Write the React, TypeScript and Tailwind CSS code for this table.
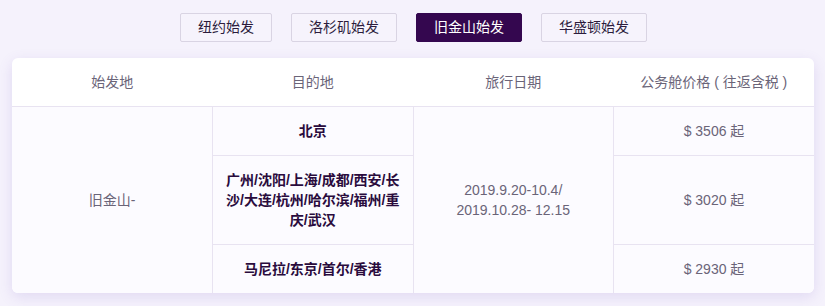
import { useState } from 'react';

const cities = ['纽约始发', '洛杉矶始发', '旧金山始发', '华盛顿始发'];

const rows = [
  { dest: '北京', price: '$ 3506 起' },
  { dest: '广州/沈阳/上海/成都/西安/长沙/大连/杭州/哈尔滨/福州/重庆/武汉', price: '$ 3020 起' },
  { dest: '马尼拉/东京/首尔/香港', price: '$ 2930 起' },
];

export default function App() {
  const [active, setActive] = useState(2);

  return (
    <div
      className="min-h-[306px] bg-[#f5f2fc] pt-[13px] pb-4"
      style={{ fontFamily: '"Liberation Sans", "Noto Sans CJK SC", sans-serif' }}
    >
      {/* 出发城市切换 */}
      <div className="flex justify-center gap-[19px] pl-[2px]">
        {cities.map((c, i) => (
          <button
            key={c}
            onClick={() => setActive(i)}
            className={`h-[29px] rounded-[2px] border px-[17px] text-[14px] leading-[27px] ${
              i === active
                ? 'border-[#34074f] bg-[#34074f] text-white'
                : 'border-[#d9d4e3] bg-[#f6f3fc] text-[#2c1c3c]'
            }`}
          >
            {c}
          </button>
        ))}
      </div>

      {/* 价格表 */}
      <div className="ml-3 mr-[11px] mt-4 overflow-hidden rounded-md bg-white shadow-[0_4px_14px_rgba(120,90,190,0.16)]">
        <table className="w-full table-fixed border-collapse text-center text-[14px] leading-5">
          <thead>
            <tr className="border-b border-[#e8e3f1] text-[#6a6478]">
              <th className="py-[14px] font-normal">始发地</th>
              <th className="py-[14px] font-normal">目的地</th>
              <th className="py-[14px] font-normal">旅行日期</th>
              <th className="py-[14px] font-normal">公务舱价格 ( 往返含税 )</th>
            </tr>
          </thead>
          <tbody className="bg-[#fcfbff]">
            {rows.map((r, i) => (
              <tr key={r.dest}>
                {i === 0 && (
                  <td rowSpan={3} className="border-r border-[#e8e3f1] text-[#6a6478]">
                    旧金山-
                  </td>
                )}
                <td
                  className={`border-r border-[#e8e3f1] px-2.5 py-[14px] font-bold text-[#2a0b3d] ${
                    i < 2 ? 'border-b' : ''
                  }`}
                >
                  {r.dest}
                </td>
                {i === 0 && (
                  <td rowSpan={3} className="border-r border-[#e8e3f1] text-[#6a6478]">
                    2019.9.20-10.4/
                    <br />
                    2019.10.28- 12.15
                  </td>
                )}
                <td
                  className={`border-[#e8e3f1] py-[14px] text-[#6a6478] ${i < 2 ? 'border-b' : ''}`}
                >
                  {r.price}
                </td>
              </tr>
            ))}
          </tbody>
        </table>
      </div>
    </div>
  );
}
